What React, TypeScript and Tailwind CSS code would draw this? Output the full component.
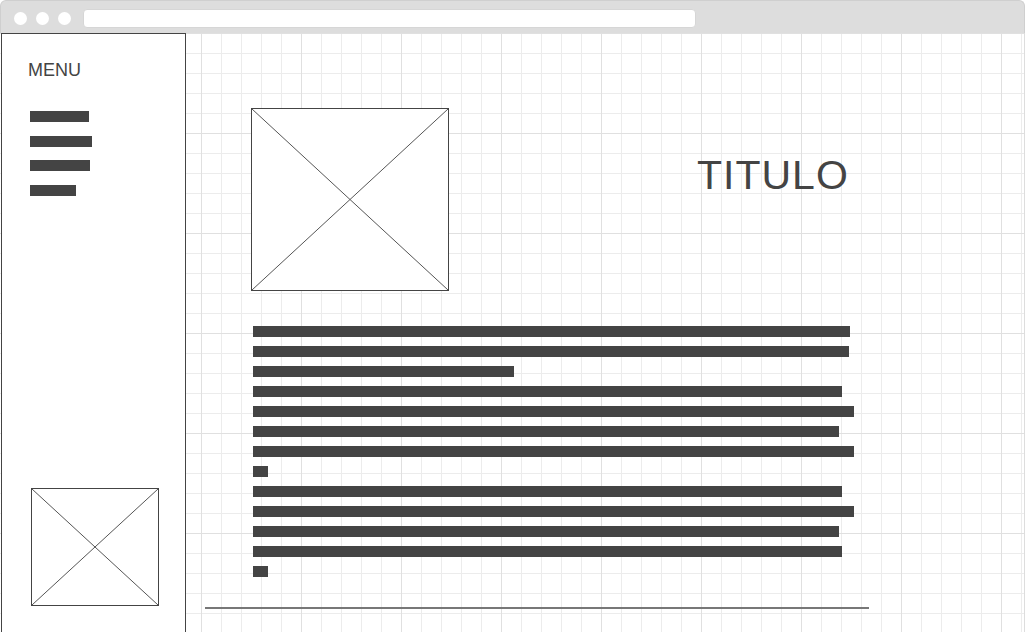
function Placeholder({ className }: { className: string }) {
    return (
        <div className={`relative bg-white border border-[#444444] ${className}`}>
            <svg className="absolute inset-0 w-full h-full" preserveAspectRatio="none" viewBox="0 0 100 100">
                <line x1="0" y1="0" x2="100" y2="100" stroke="#555555" strokeWidth="1" vectorEffect="non-scaling-stroke" />
                <line x1="100" y1="0" x2="0" y2="100" stroke="#555555" strokeWidth="1" vectorEffect="non-scaling-stroke" />
            </svg>
        </div>
    );
}

const textBars = [597, 596, 261, 589, 601, 586, 601, 15, 589, 601, 586, 589, 15];

export default function App() {
    const bar = "h-[11px] bg-[#444444]";

    return (
        <div className="w-[1026px] h-[632px] bg-white overflow-hidden font-['Liberation_Sans',Arial,sans-serif]">
            <div className="w-[1025px]">
                {/* browser chrome */}
                <div className="h-[33px] bg-[#dddddd] border border-b-0 border-[#cfcfcf] rounded-t-[6px] flex items-center pt-[3px] pl-[13px] gap-[9px]">
                    <span className="w-[13px] h-[13px] rounded-full bg-white" />
                    <span className="w-[13px] h-[13px] rounded-full bg-white" />
                    <span className="w-[13px] h-[13px] rounded-full bg-white" />
                    <span className="ml-[3px] w-[613px] h-[19px] rounded-[4px] bg-white border border-[#d6d6d6]" />
                </div>

                <div className="flex h-[599px] border-r border-[#dddddd] bg-[linear-gradient(to_right,#e0e0e0_1px,transparent_1px),linear-gradient(to_bottom,#e0e0e0_1px,transparent_1px),linear-gradient(to_right,#ececec_1px,transparent_1px),linear-gradient(to_bottom,#ececec_1px,transparent_1px)] bg-[size:100px_100px,100px_100px,20px_20px,20px_20px] bg-[position:1px_0]">
                    {/* sidebar */}
                    <aside className="ml-px w-[185px] shrink-0 bg-white border-l border-r border-t border-[#444444] flex flex-col pl-[26px] pt-[27px]">
                        <div className="text-[18px] leading-[18px] text-[#444444]">MENU</div>
                        <div className="ml-[2px] mt-[32px] flex flex-col">
                            <div className={`${bar} w-[59px]`} />
                            <div className={`${bar} w-[62px] mt-[14px]`} />
                            <div className={`${bar} w-[60px] mt-[13px]`} />
                            <div className={`${bar} w-[46px] mt-[14px]`} />
                        </div>
                        <Placeholder className="mt-auto mb-[26px] ml-[3px] w-[128px] h-[118px]" />
                    </aside>

                    {/* main */}
                    <main className="flex-1 pt-[75px]">
                        <div className="flex items-start pl-[65px]">
                            <Placeholder className="w-[198px] h-[183px] shrink-0" />
                            <h1 className="ml-[248px] mt-[47px] text-[41px] leading-none tracking-[1px] text-[#444444] font-normal">TITULO</h1>
                        </div>

                        <div className="ml-[67px] mt-[35px] flex flex-col gap-[9px]">
                            {textBars.map((w, i) => (
                                <div key={i} className={bar} style={{ width: w }} />
                            ))}
                        </div>

                        <div className="ml-[19px] mt-[30px] w-[664px] h-[2px] bg-[#777777]" />
                    </main>
                </div>
            </div>
        </div>
    );
}
